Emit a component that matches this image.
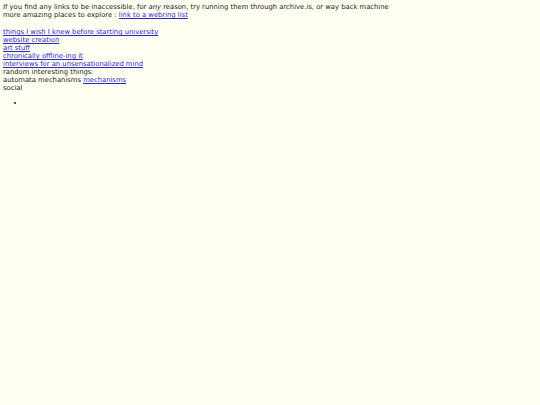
export default function App() {
  const links = [
    'things I wish I knew before starting university',
    'website creation',
    'art stuff',
    'chronically offline-ing it',
    'interviews for an unsensationalized mind',
  ];

  return (
    <div className="min-h-[405px] bg-[#fffff2] px-[3px] pt-[3px] text-[6.8px] leading-[8px] text-[#222] font-['DejaVu_Sans',sans-serif]">
      <p>
        If you find any links to be inaccessible, for <em>any</em> reason, try running them through archive.is, or way back machine
      </p>
      <p>
        more amazing places to explore :{' '}
        <a href="#" className="text-[#2a2ac8] underline">link to a webring list</a>
      </p>
      <div className="h-[9px]" />
      {links.map(l => (
        <div key={l}>
          <a href="#" className="text-[#2a2ac8] underline">{l}</a>
        </div>
      ))}
      <div>random interesting things:</div>
      <div>
        automata mechanisms <a href="#" className="text-[#2a2ac8] underline">mechanisms</a>
      </div>
      <div>social</div>
      <ul className="mt-[7px] pl-[22px] list-disc">
        <li>&nbsp;</li>
      </ul>
    </div>
  );
}
